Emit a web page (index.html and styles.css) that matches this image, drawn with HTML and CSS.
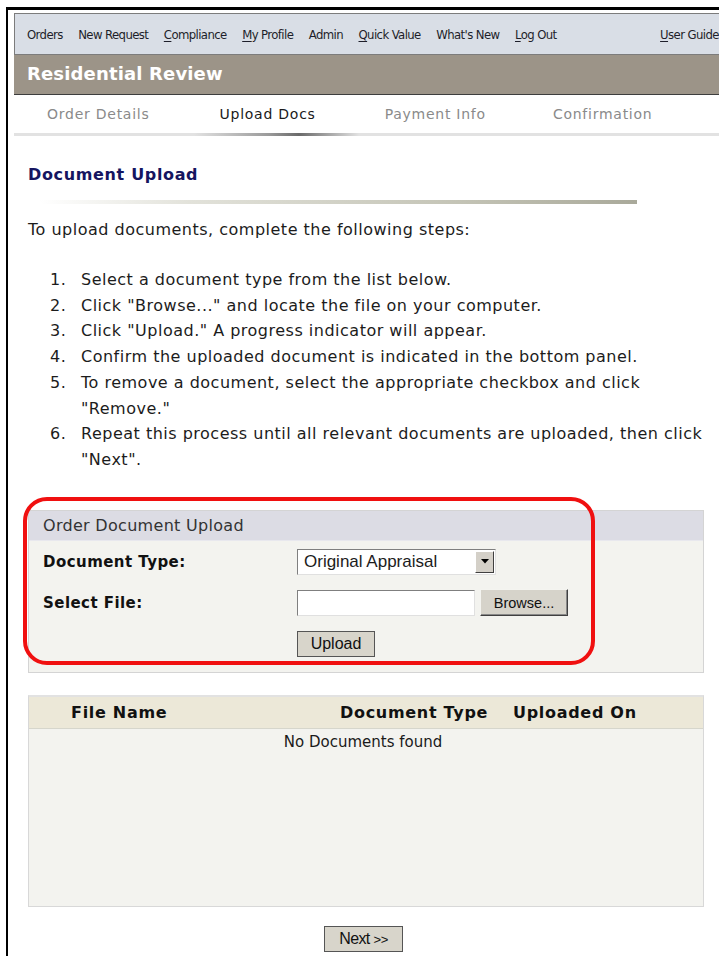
FILE: index.html
```html
<!DOCTYPE html>
<html lang="en">
<head>
<meta charset="utf-8">
<title>Residential Review - Upload Docs</title>
<link rel="stylesheet" href="styles.css">
</head>
<body>
<div class="frame">
  <div class="page">
    <nav class="topnav">
      <a class="nav-item">Orders</a>
      <a class="nav-item">New Request</a>
      <a class="nav-item"><u>C</u>ompliance</a>
      <a class="nav-item"><u>M</u>y Profile</a>
      <a class="nav-item">Admin</a>
      <a class="nav-item"><u>Q</u>uick Value</a>
      <a class="nav-item">What's New</a>
      <a class="nav-item"><u>L</u>og Out</a>
      <a class="nav-item nav-right"><u>U</u>ser Guide</a>
    </nav>
    <header class="titlebar">Residential Review</header>
    <div class="tabs">
      <span class="tab">Order Details</span>
      <span class="tab tab-active">Upload Docs</span>
      <span class="tab">Payment Info</span>
      <span class="tab">Confirmation</span>
    </div>
    <div class="tab-rule"></div>

    <main class="content">
      <h2 class="section-title">Document Upload</h2>
      <div class="section-rule"></div>
      <p class="intro">To upload documents, complete the following steps:</p>
      <ol class="steps">
        <li>Select a document type from the list below.</li>
        <li>Click "Browse..." and locate the file on your computer.</li>
        <li>Click "Upload." A progress indicator will appear.</li>
        <li>Confirm the uploaded document is indicated in the bottom panel.</li>
        <li>To remove a document, select the appropriate checkbox and click "Remove."</li>
        <li>Repeat this process until all relevant documents are uploaded, then click "Next".</li>
      </ol>

      <section class="upload-panel">
        <div class="panel-head">Order Document Upload</div>
        <div class="panel-body">
          <label class="field-label">Document Type:</label>
          <div class="select">
            <span class="select-value">Original Appraisal</span>
            <span class="select-arrow">
              <svg width="8" height="5" viewBox="0 0 8 5"><path d="M0 0H8L4 4.5Z" fill="#000"/></svg>
            </span>
          </div>
          <label class="field-label">Select File:</label>
          <div class="file-row">
            <span class="file-box"></span>
            <button class="btn btn-browse" type="button">Browse...</button>
          </div>
          <span></span>
          <div><button class="btn btn-upload" type="button">Upload</button></div>
        </div>
        <div class="highlight-ring"></div>
      </section>

      <section class="docs-panel">
        <div class="docs-head">
          <span class="col-name">File Name</span>
          <span class="col-type">Document Type</span>
          <span class="col-date">Uploaded On</span>
        </div>
        <div class="docs-body">No Documents found</div>
      </section>

      <div class="actions">
        <button class="btn btn-next" type="button">Next <span class="chev">&gt;&gt;</span></button>
      </div>
    </main>
  </div>
</div>
</body>
</html>
```
FILE: styles.css
```css
html, body {
  margin: 0;
  padding: 0;
  background: #fff;
  overflow: hidden;
}

body {
  font-family: "DejaVu Sans", Verdana, sans-serif;
  color: #1c1c1c;
}

.frame {
  margin: 7px 0 0 6px;
  border-top: 3px solid #000;
  border-left: 2px solid #000;
  padding: 3px 0 0 6px;
  height: 960px;
}

.page {
  width: 760px;
}

/* top navigation strip */
.topnav {
  display: flex;
  align-items: center;
  height: 40px;
  background: #d9dee6;
  border: 1px solid #7c7c7c;
  padding: 1px 0 0 12px;
  box-sizing: content-box;
  font-family: "DejaVu Sans Condensed", "DejaVu Sans", sans-serif;
  font-stretch: condensed;
  font-size: 13px;
  letter-spacing: -0.6px;
  color: #1e1e2a;
}

.topnav {
  height: 39px;
}

.nav-item {
  margin-right: 15.5px;
  white-space: nowrap;
}

.nav-item u {
  text-underline-offset: 2px;
}

.nav-right {
  margin-left: 88px;
}

/* product title */
.titlebar {
  height: 39px;
  line-height: 38px;
  background: #9c9488;
  border-bottom: 1px solid #3d3d3d;
  padding-left: 13px;
  color: #fff;
  font-weight: bold;
  font-size: 18px;
  letter-spacing: 0.15px;
}

/* wizard tabs */
.tabs {
  display: flex;
  height: 38px;
  align-items: center;
  font-size: 14px;
  letter-spacing: 0.75px;
  color: #8a8a8a;
}

.tab:nth-child(1) { margin-left: 33px; }
.tab:nth-child(2) { margin-left: 70px; }
.tab:nth-child(3) { margin-left: 69px; }
.tab:nth-child(4) { margin-left: 67px; }

.tab-active {
  color: #1a1a1a;
}

.tab-rule {
  height: 3px;
  width: 705px;
  background:
    linear-gradient(90deg, rgba(0,0,0,0) 180px, #9a9a9a 255px, #6a6a6a 285px, rgba(0,0,0,0) 345px),
    #e2e2e2;
}

/* main content */
.content {
  padding: 0 0 0 14px;
  width: 678px;
}

.section-title {
  margin: 29px 0 0 0;
  font-size: 16px;
  letter-spacing: 0.65px;
  font-weight: bold;
  color: #151560;
  line-height: 20px;
}

.section-rule {
  margin: 15px 0 0 12px;
  width: 597px;
  height: 4px;
  background: linear-gradient(90deg, #ffffff 0%, #e2e2da 25%, #c4c4b6 70%, #a9a99a 100%);
}

.intro {
  margin: 15px 0 0 0;
  font-size: 16px;
  letter-spacing: 0.5px;
  line-height: 22px;
}

.steps {
  margin: 26px 0 0 0;
  padding-left: 22px;
  list-style: none;
  counter-reset: step;
  font-size: 16px;
  letter-spacing: 0.5px;
  line-height: 25.7px;
}

.steps li {
  display: grid;
  grid-template-columns: 31px 1fr;
  counter-increment: step;
}

.steps li::before {
  content: counter(step) ".";
}

/* upload form panel */
.upload-panel {
  position: relative;
  margin-top: 37px;
  width: 674px;
  border: 1px solid #d4d4d4;
  background: #f3f3ef;
}

.panel-head {
  height: 29px;
  line-height: 29px;
  background: #dcdce4;
  border-bottom: 1px solid #e8e8ee;
  padding-left: 14px;
  font-size: 16px;
  letter-spacing: 0.3px;
  color: #333;
}

.panel-body {
  display: grid;
  grid-template-columns: 254px 1fr;
  row-gap: 14.5px;
  align-items: center;
  padding: 8px 0 15px 14px;
}

.field-label {
  font-weight: bold;
  font-size: 15px;
  letter-spacing: 0.45px;
  color: #111;
}

.select {
  display: flex;
  align-items: stretch;
  width: 199px;
  height: 26px;
  box-sizing: border-box;
  border: 1px solid #7f7f7f;
  border-right-color: #e0e0e0;
  border-bottom-color: #e0e0e0;
  background: #fff;
  font-family: "Liberation Sans", Arial, sans-serif;
  font-size: 17px;
}

.select-value {
  flex: 1;
  padding-left: 6px;
  line-height: 24px;
}

.select-arrow {
  width: 19px;
  margin: 1px;
  box-sizing: border-box;
  display: flex;
  align-items: center;
  justify-content: center;
  background: #d4d0c8;
  border: 1px solid;
  border-color: #fff #404040 #404040 #fff;
}

.file-row {
  display: flex;
  align-items: center;
  gap: 5px;
}

.file-box {
  display: block;
  width: 178px;
  height: 26px;
  box-sizing: border-box;
  background: #fff;
  border: 1px solid #7f7f7f;
  border-right-color: #e0e0e0;
  border-bottom-color: #e0e0e0;
}

.btn {
  font-family: "Liberation Sans", Arial, sans-serif;
  font-size: 14.5px;
  color: #111;
  background: #d6d3ca;
  border: 1px solid;
  border-color: #f4f4f0 #404040 #404040 #f4f4f0;
  box-shadow: inset -1px -1px 0 #888;
  padding: 0;
  height: 27px;
}

.btn-browse {
  width: 88px;
}

.btn-upload {
  width: 78px;
  height: 26px;
  font-size: 16px;
  border-color: #555;
  box-shadow: none;
  background: #d8d5cb;
}

/* red annotation ring drawn over the form */
.highlight-ring {
  position: absolute;
  left: -6px;
  top: -14px;
  width: 572px;
  height: 168px;
  box-sizing: border-box;
  border: 4px solid #f01010;
  border-radius: 24px;
  pointer-events: none;
}

/* uploaded documents list */
.docs-panel {
  margin-top: 22px;
  width: 676px;
  box-sizing: border-box;
  border: 1px solid #d8d8d8;
  border-top: 2px solid #e2e2e2;
  background: #f3f3ef;
}

.docs-head {
  display: flex;
  height: 31px;
  align-items: center;
  background: #ece8d8;
  border-bottom: 1px solid #d6d6cc;
  font-weight: bold;
  font-size: 16px;
  letter-spacing: 0.7px;
  color: #111;
}

.col-name { margin-left: 42px; width: 269px; }
.col-type { width: 173px; }

.docs-body {
  height: 177px;
  padding-right: 6px;
  text-align: center;
  font-size: 15px;
  line-height: 26px;
  color: #1a1a1a;
}

.actions {
  display: flex;
  justify-content: center;
  width: 671px;
  margin-top: 19px;
}

.btn-next {
  width: 79px;
  height: 26px;
  font-size: 16px;
  border-color: #555;
  box-shadow: none;
  background: #d8d5cb;
  letter-spacing: -0.6px;
}

.chev {
  font-size: 13px;
  letter-spacing: -0.5px;
}
```
